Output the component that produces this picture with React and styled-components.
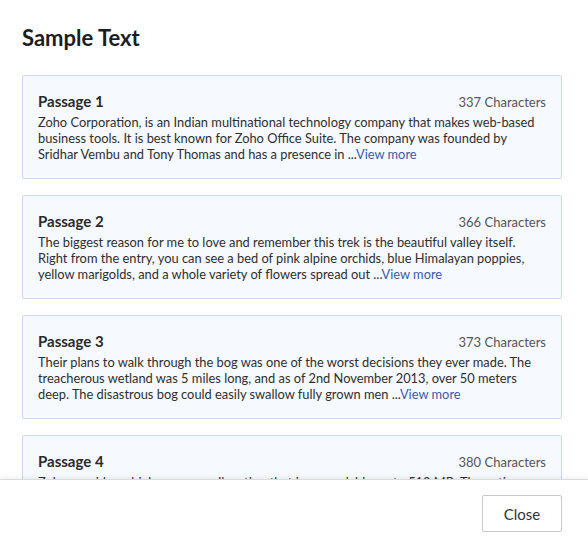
import React from "react";
import styled, { createGlobalStyle } from "styled-components";

const GlobalStyle = createGlobalStyle`
  html, body { margin: 0; padding: 0; background: #fff; }
  body { font-family: Lato, "Open Sans", sans-serif; -webkit-font-smoothing: antialiased; }
`;

const Modal = styled.div`
  width: 588px;
  height: 545px;
  display: flex;
  flex-direction: column;
  background: #fff;
  overflow: hidden;
`;

const Header = styled.header`
  padding: 25px 22px 0;
  height: 50px;
  box-sizing: border-box;
`;

const Title = styled.h1`
  margin: 0;
  font-size: 22px;
  line-height: 26px;
  font-weight: 700;
  color: #1d1d1f;
`;

const Body = styled.div`
  flex: 1;
  overflow: hidden;
  padding: 25px 26px 0 22px;
  display: flex;
  flex-direction: column;
  gap: 16px;
`;

const Card = styled.article`
  flex-shrink: 0;
  border: 1px solid #ccd6ee;
  background: #f6f9fe;
  border-radius: 2px;
  padding: 15px;
  height: 104px;
  box-sizing: border-box;
  overflow: hidden;
`;

const CardHead = styled.div`
  display: flex;
  justify-content: space-between;
  align-items: baseline;
  margin-bottom: 3px;
`;

const CardTitle = styled.h2`
  margin: 0;
  font-size: 15px;
  line-height: 20px;
  font-weight: 700;
  color: #2a2a2a;
`;

const Count = styled.span`
  font-size: 13px;
  color: #555;
`;

const Text = styled.p`
  margin: 0;
  font-size: 12.85px;
  line-height: 16px;
  color: #2f2f2f;
`;

const More = styled.a`
  color: #3c5ba8;
  text-decoration: none;
  cursor: pointer;
`;

const Footer = styled.footer`
  height: 66px;
  flex-shrink: 0;
  box-sizing: border-box;
  border-top: 1px solid #dcdcdc;
  box-shadow: 0 -2px 4px rgba(0, 0, 0, 0.06);
  padding: 15px 26px 0 22px;
  display: flex;
  justify-content: flex-end;
  align-items: flex-start;
  position: relative;
  background: #fff;
`;

const Button = styled.button`
  width: 80px;
  height: 37px;
  border: 1px solid #c8c8c8;
  border-radius: 2px;
  background: #fff;
  font-family: Lato, sans-serif;
  font-size: 15px;
  color: #333;
  cursor: pointer;
`;

const passages = [
  {
    title: "Passage 1",
    count: 337,
    text: "Zoho Corporation, is an Indian multinational technology company that makes web-based business tools. It is best known for Zoho Office Suite. The company was founded by Sridhar Vembu and Tony Thomas and has a presence in ",
  },
  {
    title: "Passage 2",
    count: 366,
    text: "The biggest reason for me to love and remember this trek is the beautiful valley itself. Right from the entry, you can see a bed of pink alpine orchids, blue Himalayan poppies, yellow marigolds, and a whole variety of flowers spread out ",
  },
  {
    title: "Passage 3",
    count: 373,
    text: "Their plans to walk through the bog was one of the worst decisions they ever made. The treacherous wetland was 5 miles long, and as of 2nd November 2013, over 50 meters deep. The disastrous bog could easily swallow fully grown men ",
  },
  {
    title: "Passage 4",
    count: 380,
    text: "Zoho provides a high-resource allocation that is expandable up to 512 MB. The native apps are available for every major platform, and the storage can be shared across the whole team ",
  },
];

export default function App() {
  return (
    <>
      <GlobalStyle />
      <Modal>
        <Header>
          <Title>Sample Text</Title>
        </Header>
        <Body>
          {passages.map((p) => (
            <Card key={p.title}>
              <CardHead>
                <CardTitle>{p.title}</CardTitle>
                <Count>{p.count} Characters</Count>
              </CardHead>
              <Text>
                {p.text}...<More>View more</More>
              </Text>
            </Card>
          ))}
        </Body>
        <Footer>
          <Button>Close</Button>
        </Footer>
      </Modal>
    </>
  );
}
